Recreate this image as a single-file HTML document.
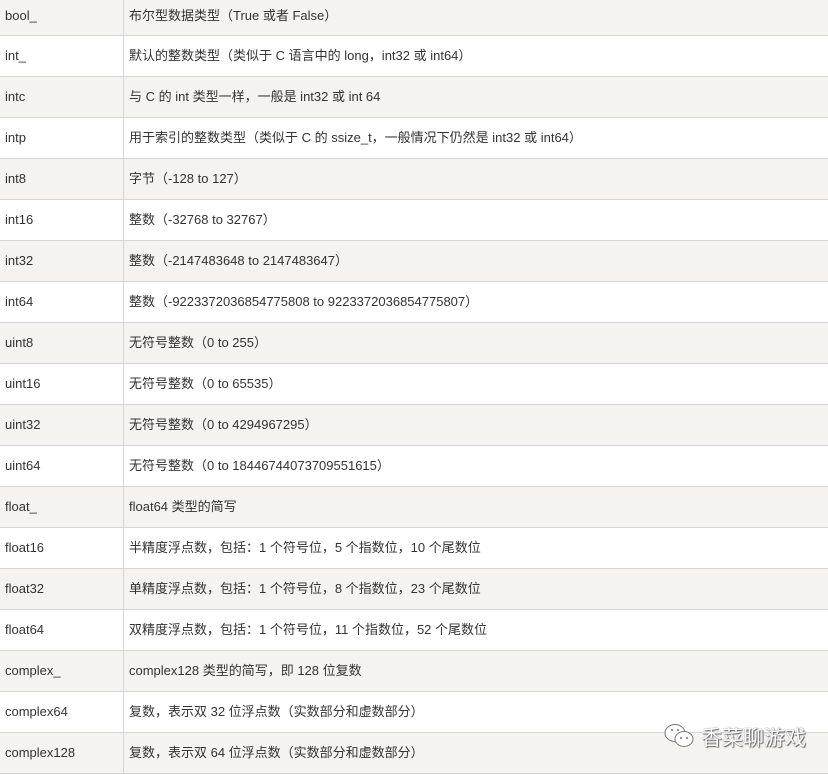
<html><head><style>
body{margin:0;width:828px;height:774px;overflow:hidden;background:#fff;font-family:"Liberation Sans","Noto Sans CJK SC",sans-serif;font-size:13px;color:#333}
.r{position:absolute;left:0;width:828px;height:40px;border-bottom:1px solid #d6d6d6}
.g{background:#f4f3f0}
.a,.b{position:absolute;top:0;height:40px;line-height:40px;white-space:nowrap}
.r:first-child .a,.r:first-child .b{top:-3px;line-height:37px}
.a{left:5px}
.b{left:129px}
.v{position:absolute;left:123px;top:0;width:1px;height:773px;background:#d6d6d6}
.wm{position:absolute;left:665px;top:722px;font-size:21px;color:#fff;text-shadow:0 0 1px #555,1px 1px 1px #666;font-family:"Noto Sans CJK SC",sans-serif}
</style></head><body>
<div class="r g" style="top:0;height:35px"><span class="a">bool_</span><span class="b">布尔型数据类型（True 或者 False）</span></div>
<div class="r" style="top:36px"><span class="a">int_</span><span class="b">默认的整数类型（类似于 C 语言中的 long，int32 或 int64）</span></div>
<div class="r g" style="top:77px"><span class="a">intc</span><span class="b">与 C 的 int 类型一样，一般是 int32 或 int 64</span></div>
<div class="r" style="top:118px"><span class="a">intp</span><span class="b">用于索引的整数类型（类似于 C 的 ssize_t，一般情况下仍然是 int32 或 int64）</span></div>
<div class="r g" style="top:159px"><span class="a">int8</span><span class="b">字节（-128 to 127）</span></div>
<div class="r" style="top:200px"><span class="a">int16</span><span class="b">整数（-32768 to 32767）</span></div>
<div class="r g" style="top:241px"><span class="a">int32</span><span class="b">整数（-2147483648 to 2147483647）</span></div>
<div class="r" style="top:282px"><span class="a">int64</span><span class="b">整数（-9223372036854775808 to 9223372036854775807）</span></div>
<div class="r g" style="top:323px"><span class="a">uint8</span><span class="b">无符号整数（0 to 255）</span></div>
<div class="r" style="top:364px"><span class="a">uint16</span><span class="b">无符号整数（0 to 65535）</span></div>
<div class="r g" style="top:405px"><span class="a">uint32</span><span class="b">无符号整数（0 to 4294967295）</span></div>
<div class="r" style="top:446px"><span class="a">uint64</span><span class="b">无符号整数（0 to 18446744073709551615）</span></div>
<div class="r g" style="top:487px"><span class="a">float_</span><span class="b">float64 类型的简写</span></div>
<div class="r" style="top:528px"><span class="a">float16</span><span class="b">半精度浮点数，包括：1 个符号位，5 个指数位，10 个尾数位</span></div>
<div class="r g" style="top:569px"><span class="a">float32</span><span class="b">单精度浮点数，包括：1 个符号位，8 个指数位，23 个尾数位</span></div>
<div class="r" style="top:610px"><span class="a">float64</span><span class="b">双精度浮点数，包括：1 个符号位，11 个指数位，52 个尾数位</span></div>
<div class="r g" style="top:651px"><span class="a">complex_</span><span class="b">complex128 类型的简写，即 128 位复数</span></div>
<div class="r" style="top:692px"><span class="a">complex64</span><span class="b">复数，表示双 32 位浮点数（实数部分和虚数部分）</span></div>
<div class="r g" style="top:733px"><span class="a">complex128</span><span class="b">复数，表示双 64 位浮点数（实数部分和虚数部分）</span></div>
<div class="v"></div>
<svg style="position:absolute;left:664px;top:723px" width="32" height="26" viewBox="0 0 32 26"><ellipse cx="11" cy="10" rx="10" ry="8.5" fill="#fff" stroke="#777" stroke-width="1"/><ellipse cx="20" cy="16" rx="9" ry="7.5" fill="#fff" stroke="#777" stroke-width="1"/><circle cx="17" cy="15" r="1" fill="#777"/><circle cx="23" cy="15" r="1" fill="#777"/><circle cx="8" cy="7" r="1" fill="#777"/><circle cx="14" cy="7" r="1" fill="#777"/></svg>
<div class="wm" style="left:701px">香菜聊游戏</div>
</body></html>
